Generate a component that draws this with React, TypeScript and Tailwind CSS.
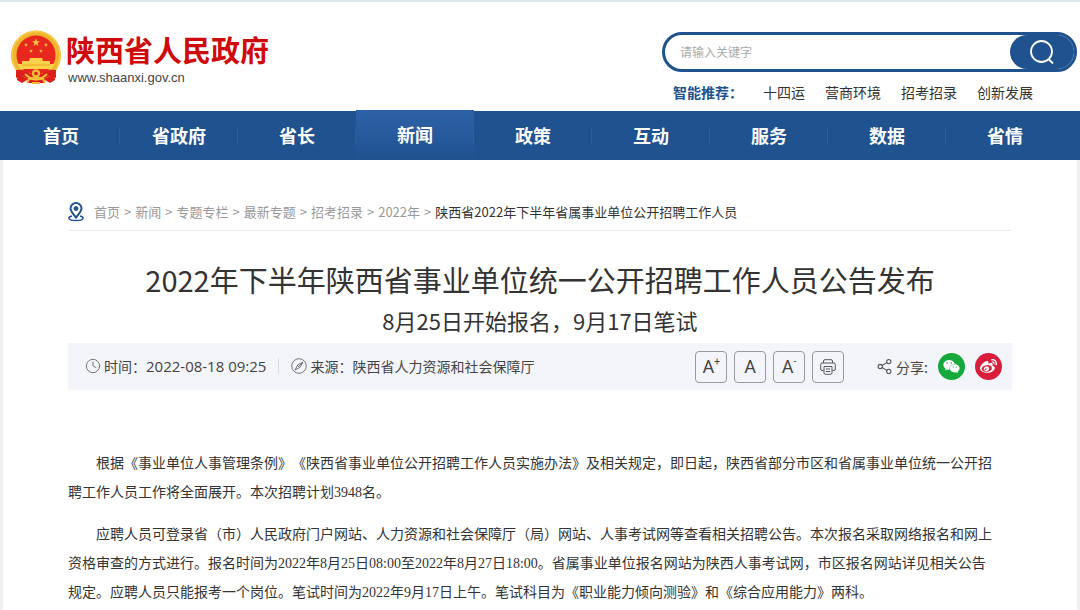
import { Clock, Share2 } from "lucide-react";
import { FaWeibo, FaWeixin } from "react-icons/fa";

interface NavItemProps {
    text: string;
    active?: boolean;
    last?: boolean;
}

const hotWords = ["十四运", "营商环境", "招考招录", "创新发展"];
const navs = ["首页", "省政府", "省长", "新闻", "政策", "互动", "服务", "数据", "省情"];
const crumbs = ["首页", "新闻", "专题专栏", "最新专题", "招考招录", "2022年"];

const star = "M0 -5 L1.2 -1.6 L4.8 -1.5 L1.9 0.6 L2.9 4 L0 2 L-2.9 4 L-1.9 0.6 L-4.8 -1.5 L-1.2 -1.6 Z";

const Emblem = () => (
    <svg viewBox="0 0 52 54" className="w-[52px] h-[54px] shrink-0" aria-hidden="true">
        <path d="M8 38 L44 38 L45 50 L40 53 L35 50 L34 53 L18 53 L17 50 L12 53 L7 50 Z" fill="#dc1f1a" />
        <circle cx="26" cy="25.500" r="25" fill="#f0b52c" />
        <circle cx="26" cy="25.500" r="24" fill="none" stroke="#f8ca4c" strokeWidth="1.500" />
        <circle cx="26" cy="25" r="19.500" fill="#e8271f" />
        <path d={star} transform="translate(26 12.500) scale(.85)" fill="#f7c63d" />
        <path d={star} transform="translate(16 15) scale(.42)" fill="#f7c63d" />
        <path d={star} transform="translate(36 15) scale(.42)" fill="#f7c63d" />
        <path d={star} transform="translate(21 21) scale(.42)" fill="#f7c63d" />
        <path d={star} transform="translate(31 21) scale(.42)" fill="#f7c63d" />
        <path d="M20 28 H32 L33 31 H40 V34 H45 L42 39 H10 L7 34 H12 V31 H19 Z" fill="#fbd24a" />
        <path d="M12 35 H40" stroke="#e8971f" strokeWidth=".8" />
        <path d="M6 40 Q15 39 20 44 Q26 38 32 44 Q37 39 46 40 L46 48 Q40 44 35 49 Q32 46 26 47 Q20 46 17 49 Q12 44 6 48 Z" fill="#dc1f1a" />
        <circle cx="26" cy="43.500" r="4.200" fill="#f4bd35" />
        <circle cx="26" cy="43.500" r="1.800" fill="#dc1f1a" />
        <path d="M15 44 Q21 50 26 48 Q31 50 37 44" fill="none" stroke="#f4bd35" strokeWidth="2" />
        <path d="M19 49 L17 53 M33 49 L35 53 M22 53 H30" stroke="#f4bd35" strokeWidth="2" />
    </svg>
);

const PinIcon = () => (
    <svg viewBox="0 0 16 20" className="w-4 h-5 shrink-0" fill="none" stroke="#20528f" aria-hidden="true">
        <path d="M8 15.500 C5 12 2.500 9 2.500 6.500 A5.500 5.500 0 0 1 13.500 6.500 C13.500 9 11 12 8 15.500 Z" strokeWidth="2" />
        <circle cx="8" cy="6.500" r="2" fill="#20528f" />
        <path d="M4 14 C-1 15 0 18.500 8 18.500 C16 18.500 17 15 12 14" strokeWidth="1.500" />
    </svg>
);

const CompassIcon = () => (
    <svg viewBox="0 0 16 16" className="w-4 h-4 shrink-0" fill="none" stroke="#777" aria-hidden="true">
        <circle cx="8" cy="8" r="7.300" />
        <path d="M12 4 L9.200 9.200 L4 12 L6.800 6.800 Z M12 4 L7 9" />
    </svg>
);

const PrintIcon = () => (
    <svg viewBox="0 0 16 16" className="w-4 h-4" fill="none" stroke="#555" aria-hidden="true">
        <path d="M3.500 4 V2 Q3.500 .7 5 .7 H11 Q12.500 .7 12.500 2 V4" />
        <path d="M3.500 11.500 H2 Q.7 11.500 .7 10 V5.500 Q.7 4 2 4 H14 Q15.300 4 15.300 5.500 V10 Q15.300 11.500 14 11.500 H12.500" />
        <path d="M4 7.500 H12 V14 Q12 15.300 10.700 15.300 H5.300 Q4 15.300 4 14 Z M5.800 10 H10.200 M5.800 12.500 H10.200" />
    </svg>
);

const SearchIcon = () => (
    <svg viewBox="0 0 26 26" className="w-[26px] h-[26px]" fill="none" stroke="#fff" strokeWidth="1.800" aria-hidden="true">
        <circle cx="12.500" cy="12.500" r="10.500" />
        <path d="M19.500 20 L24 24.500" />
    </svg>
);

const NavItem = ({ text, active, last }: NavItemProps) => (
    <li className={`relative flex-1 ${active ? "-mt-px bg-linear-to-b from-[#2d62a8] to-[#20528f]" : ""}`}>
        <a href="#" className="flex h-[49px] items-center justify-center pb-0.5 text-lg font-bold text-white">{text}</a>
        {!last && <span className="absolute right-0 top-4 h-[18px] w-px bg-[#2f5f9b]" />}
    </li>
);

const Header = () => (
    <header className="flex h-[111px] justify-between border-t-2 border-[#dae7ed] pl-2.5 pr-[3px]">
        <a href="#" className="mt-7 flex items-start gap-1">
            <Emblem />
            <div className="mt-1 flex flex-col">
                <span className="font-['Liberation_Sans','Noto_Sans_CJK_SC',sans-serif] text-[29px] leading-9 font-bold text-[#cf0a0a]">陕西省人民政府</span>
                <span className="pl-0.5 font-['Liberation_Sans',sans-serif] text-[13px] leading-4 text-[#444]">www.shaanxi.gov.cn</span>
            </div>
        </a>
        <div className="mt-[30px] w-[415px]">
            <form className="flex h-10 items-stretch rounded-full border-3 border-[#20528f]" onSubmit={(e) => e.preventDefault()}>
                <input
                    type="text"
                    aria-label="请输入关键字"
                    placeholder="请输入关键字"
                    className="min-w-0 flex-1 rounded-full pl-[15px] text-xs outline-none placeholder:text-[#aaa]"
                />
                <button type="submit" aria-label="搜索" className="flex w-16 items-center justify-center rounded-full bg-[#20528f]">
                    <SearchIcon />
                </button>
            </form>
            <div className="mt-2.5 flex gap-5 pl-[11px] text-sm leading-5 text-[#333]">
                <span className="font-bold text-[#20528f]">智能推荐：</span>
                {hotWords.map((word) => (
                    <a key={word} href="#">{word}</a>
                ))}
            </div>
        </div>
    </header>
);

const Breadcrumb = () => (
    <nav className="flex items-center gap-2.5 border-b border-[#ececec] pb-2 text-[13px] leading-5 text-[#999]">
        <PinIcon />
        <div className="flex gap-1">
            {crumbs.map((text) => (
                <span key={text} className="flex gap-1">
                    <a href="#">{text}</a>
                    <span>&gt;</span>
                </span>
            ))}
            <span className="text-[#333]">陕西省2022年下半年省属事业单位公开招聘工作人员</span>
        </div>
    </nav>
);

const toolButton = "flex h-8 w-8 items-center justify-center rounded-sm border border-[#999] font-['Roboto',sans-serif] text-lg text-[#444]";

const MetaBar = () => (
    <div className="flex h-[47px] items-center justify-between bg-[#f4f5fb] pl-[17px] pr-2.5 text-sm text-[#444]">
        <div className="flex items-center">
            <Clock size={16} strokeWidth={1.5} color="#777" />
            <span className="ml-[3px]">时间：</span>
            <span className="font-['Open_Sans',sans-serif] text-[15px]">2022-08-18 09:25</span>
            <span className="mx-3 h-4 w-px bg-[#dcdde3]" />
            <CompassIcon />
            <span className="ml-[3px]">来源：陕西省人力资源和社会保障厅</span>
        </div>
        <div className="flex items-center">
            <div className="flex gap-[7px]">
                <button type="button" className={toolButton} aria-label="放大字号">
                    A<sup className="text-[10px]">+</sup>
                </button>
                <button type="button" className={toolButton}>A</button>
                <button type="button" className={toolButton} aria-label="缩小字号">
                    A<sup className="text-[10px]">-</sup>
                </button>
                <button type="button" className={toolButton} aria-label="打印">
                    <PrintIcon />
                </button>
            </div>
            <Share2 size={17} strokeWidth={1.5} color="#555" className="ml-8" />
            <span className="ml-[3px]">分享:</span>
            <a href="#" aria-label="微信" className="ml-2.5 flex h-[27px] w-[27px] items-center justify-center rounded-full bg-[#14a93a] text-white">
                <FaWeixin size={17} />
            </a>
            <a href="#" aria-label="微博" className="ml-2.5 flex h-[27px] w-[27px] items-center justify-center rounded-full bg-[#d81e3a] text-white">
                <FaWeibo size={17} />
            </a>
        </div>
    </div>
);

const App = () => {
    return (
        <div className="h-screen overflow-hidden bg-white font-['Noto_Sans_CJK_SC',sans-serif]">
            <Header />
            <nav className="bg-[#20528f] pl-0.5 pr-4">
                <ul className="flex">
                    {navs.map((text, index) => (
                        <NavItem key={text} text={text} active={text === "新闻"} last={index === navs.length - 1} />
                    ))}
                </ul>
            </nav>
            <main className="min-h-screen border-x-3 border-[#f0f0f0] px-[65px] pt-[42px]">
                <Breadcrumb />
                <h1 className="mt-[26px] text-center text-[29px] leading-11 text-[#333]">
                    2022年下半年陕西省事业单位统一公开招聘工作人员公告发布
                </h1>
                <h2 className="mb-1 text-center text-[22px] leading-[38px] text-[#333]">8月25日开始报名，9月17日笔试</h2>
                <MetaBar />
                <article className="mt-[59px] flex flex-col gap-[13px] pr-4 indent-7 font-['Liberation_Serif','Noto_Sans_CJK_SC',sans-serif] text-sm leading-[29px] text-[#333] [text-spacing-trim:space-all]">
                    <p>根据《事业单位人事管理条例》《陕西省事业单位公开招聘工作人员实施办法》及相关规定，即日起，陕西省部分市区和省属事业单位统一公开招聘工作人员工作将全面展开。本次招聘计划3948名。</p>
                    <p>应聘人员可登录省（市）人民政府门户网站、人力资源和社会保障厅（局）网站、人事考试网等查看相关招聘公告。本次报名采取网络报名和网上资格审查的方式进行。报名时间为2022年8月25日08:00至2022年8月27日18:00。省属事业单位报名网站为陕西人事考试网，市区报名网站详见相关公告规定。应聘人员只能报考一个岗位。笔试时间为2022年9月17日上午。笔试科目为《职业能力倾向测验》和《综合应用能力》两科。</p>
                </article>
            </main>
        </div>
    );
};

export default App;
